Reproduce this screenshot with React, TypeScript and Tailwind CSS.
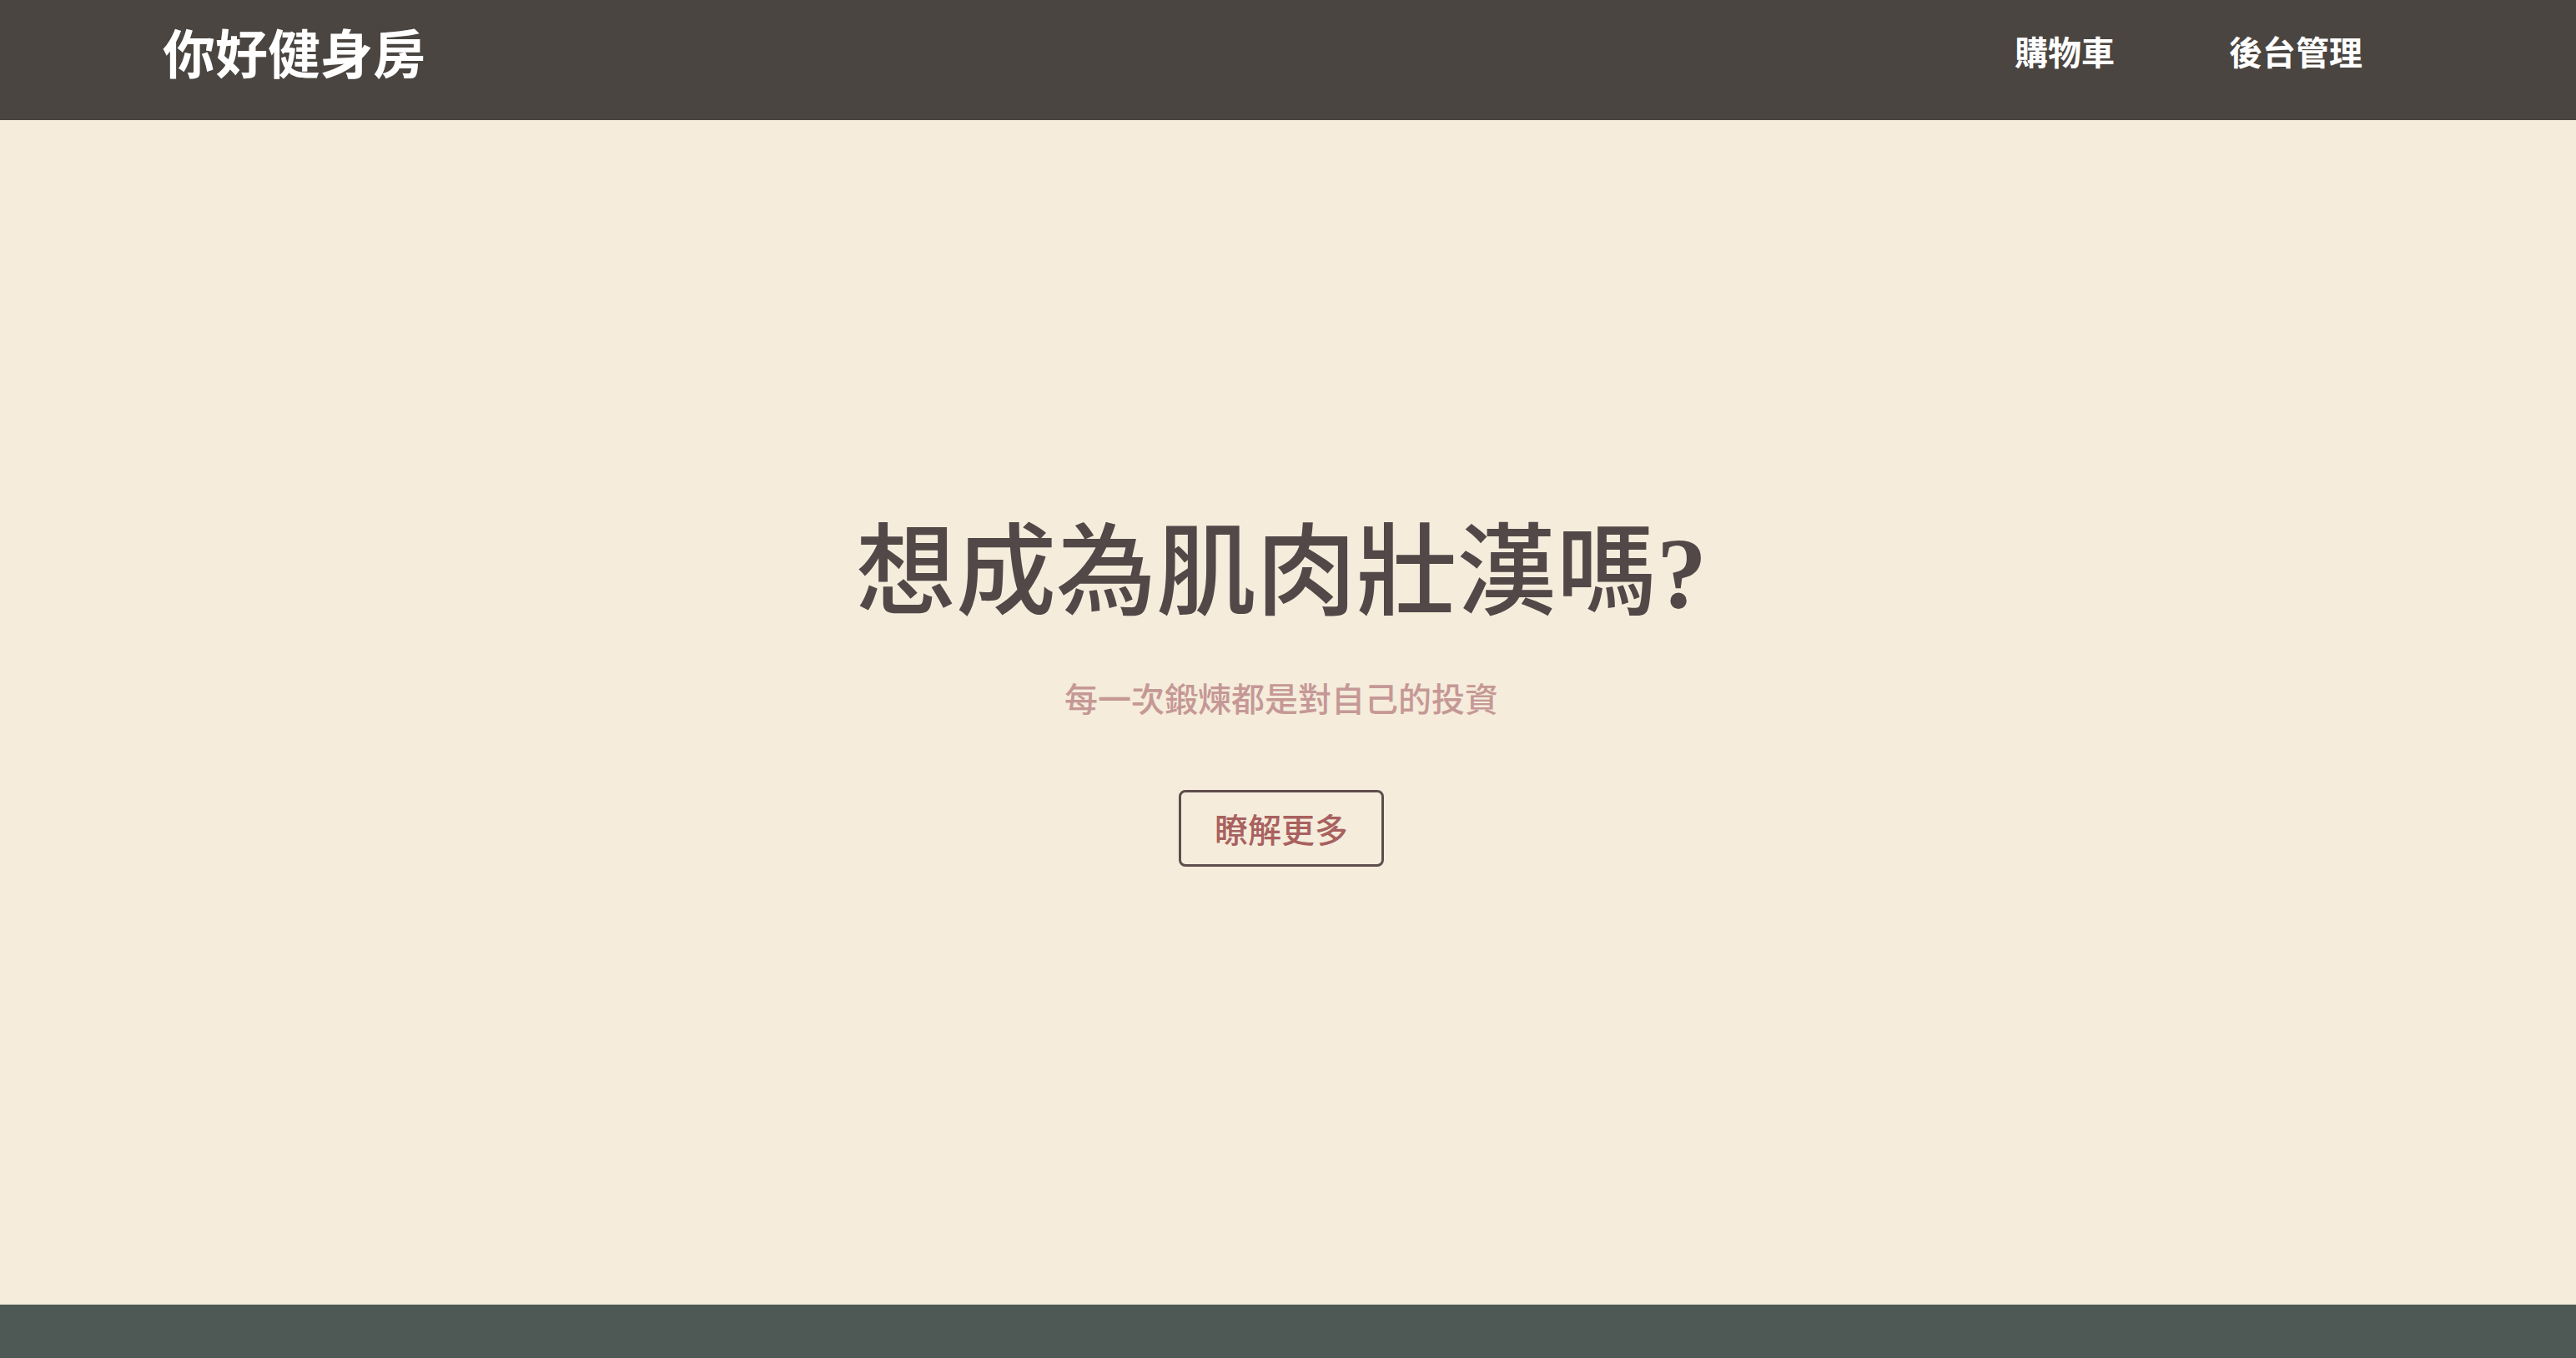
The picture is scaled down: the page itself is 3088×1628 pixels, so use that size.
import React from "react";

export default function App() {
  const cjk = '"Noto Sans CJK TC", "Noto Sans", sans-serif';
  return (
    <div className="h-screen flex flex-col bg-[#f5ecdb]" style={{ fontFamily: cjk }}>
      <header className="h-[144px] shrink-0 bg-[#4a4540] flex items-center justify-between pl-[195px] pr-[256px] pb-[22px]">
        <a className="text-[63px] leading-[1.5] font-bold text-white">你好健身房</a>
        <nav className="flex items-center gap-[137px]">
          <a className="text-[40px] leading-[1.5] font-bold text-white">購物車</a>
          <a className="text-[40px] leading-[1.5] font-bold text-white">後台管理</a>
        </nav>
      </header>
      <main className="flex-1 flex flex-col items-center justify-center pb-[66px] pr-[16px]">
        <h1
          className="mt-[12px] text-[120px] leading-[144px] font-medium text-[#534848]"
          style={{ fontFamily: '"Liberation Serif", "Noto Sans CJK TC", serif' }}
        >
          想成為肌肉壯漢嗎<span className="font-bold">?</span>
        </h1>
        <p className="mt-[46px] text-[40px] leading-[60px] font-medium text-[#c59896]">
          每一次鍛煉都是對自己的投資
        </p>
        <button className="mt-[81px] px-[40px] py-[13px] border-[3px] border-[#5e4d4d] rounded-[8px] text-[40px] leading-[60px] font-medium text-[#a8615f]">
          瞭解更多
        </button>
      </main>
      <footer className="h-[64px] shrink-0 bg-[#4e5854]" />
    </div>
  );
}
